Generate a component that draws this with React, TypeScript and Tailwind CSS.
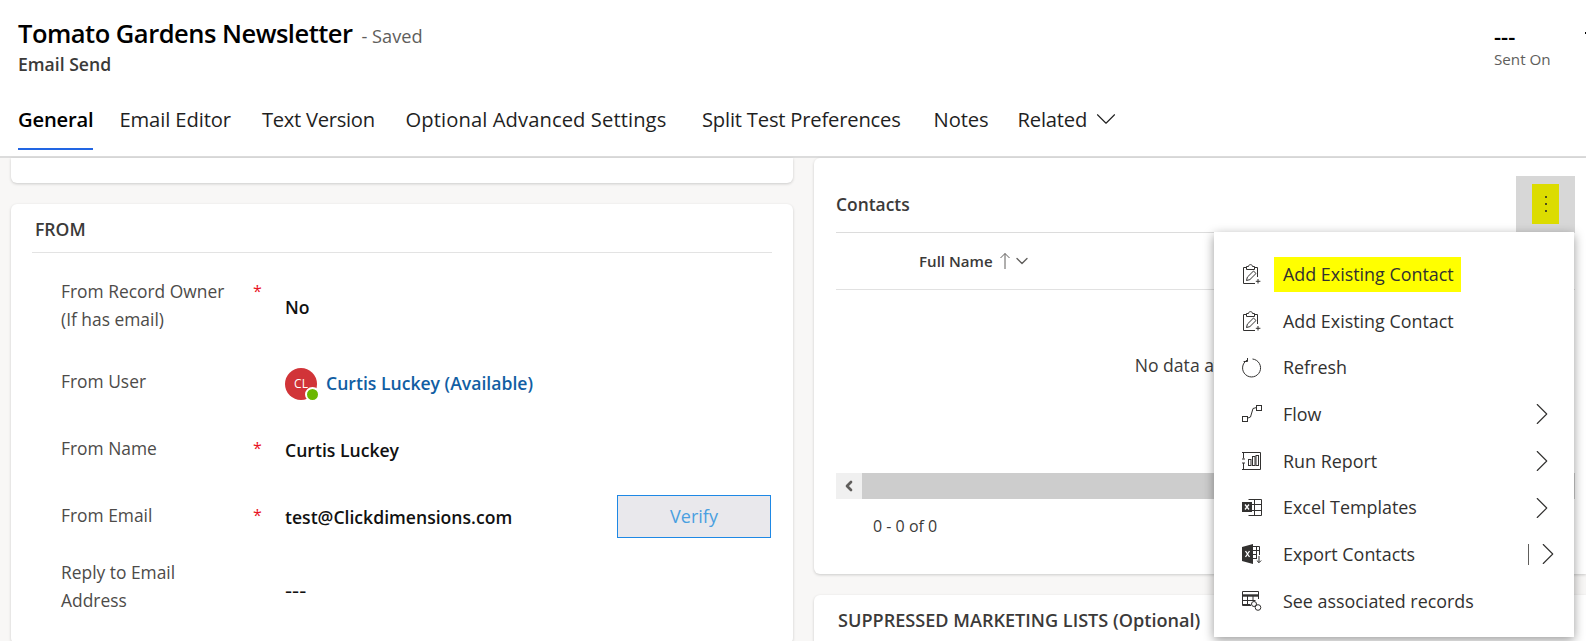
import { ChevronDown, ChevronLeft, ChevronRight } from "lucide-react";

const tabs = [
  { label: "Email Editor", width: "w-[142.6px] tracking-[-0.1px]" },
  { label: "Text Version", width: "w-[143.6px] tracking-[-0.3px]" },
  { label: "Optional Advanced Settings", width: "w-[296.4px] tracking-[0.08px]" },
  { label: "Split Test Preferences", width: "w-[231.6px] tracking-[-0.2px]" },
  { label: "Notes", width: "w-[84px] tracking-[-0.1px]" },
];

function ClipboardIcon() {
  return (
    <svg width="20" height="20" viewBox="0 0 20 20" fill="none" stroke="#323130" strokeWidth="1">
      <path d="M5 3.5H1.5V19.5H13M12 3.5h3.5V13" />
      <path d="M4.5 5.5V2.5H6.5C6.5 0 10.5 0 10.5 2.5H12.5V5.5Z" />
      <path d="M4.5 16.5l.9-3.4 6.1-6.1 2.5 2.5-6.1 6.1Z" />
      <path d="M16 15v4.5M13.8 17.3h4.6" />
    </svg>
  );
}

function RefreshIcon() {
  return (
    <svg width="20" height="20" viewBox="0 0 20 20" fill="none" stroke="#323130" strokeWidth="1">
      <path d="M5 2.2A9 9 0 1 0 10.5 1" />
      <path d="M5.5 0V3.5H1.6" />
    </svg>
  );
}

function FlowIcon() {
  return (
    <svg width="20" height="20" viewBox="0 0 20 20" fill="none" stroke="#323130" strokeWidth="1">
      <rect x="0.5" y="12.5" width="5" height="5" />
      <rect x="14.5" y="1.5" width="5" height="5" />
      <path d="M6 14l2.5-1 2.5-8.5 3.5-1" />
    </svg>
  );
}

function ReportIcon() {
  return (
    <svg width="20" height="20" viewBox="0 0 20 20" fill="none" stroke="#323130" strokeWidth="1">
      <path d="M1.5 1.5H18.5V18.5H1.5" />
      <path d="M0 1.5h3M1.5 1.5v6M0 8h3M0 12h3M1.5 12v6.5M0 18.5h3" />
      <rect x="6.5" y="8.5" width="2.5" height="6" />
      <rect x="10.5" y="5.5" width="2.5" height="9" />
      <rect x="14" y="4.5" width="2.5" height="10" />
    </svg>
  );
}

function ExcelIcon() {
  return (
    <svg width="20" height="20" viewBox="0 0 20 20" fill="none">
      <path d="M6.5 1.5h13v16h-13M6.5 6.5h13M6.5 12.5h13M12.5 1.5v16" stroke="#323130" />
      <rect x="0" y="4" width="10" height="10" fill="#323130" />
      <path d="M3 6.5l4 5M7 6.5l-4 5" stroke="#fff" strokeWidth="1.3" />
    </svg>
  );
}

function ExportIcon() {
  return (
    <svg width="20" height="20" viewBox="0 0 20 20" fill="none">
      <path d="M0 3L11 0V20L0 17Z" fill="#323130" />
      <path d="M3.5 7l4 6M7.5 7l-4 6" stroke="#fff" strokeWidth="1.3" />
      <path d="M11 2.5h6.5V11M11 6.5h6.5M11 10.5h4M11 14.5h4M14.5 3v12" stroke="#323130" />
      <path d="M17 12v6.5M14.8 16.5l2.2 2.2 2.2-2.2" stroke="#323130" />
    </svg>
  );
}

function RecordsIcon() {
  return (
    <svg width="20" height="20" viewBox="0 0 20 20" fill="none" stroke="#323130" strokeWidth="1">
      <path d="M9 14.5H.5V.5H16.5V8" />
      <path d="M.5 4.5h16" strokeWidth="2.4" />
      <path d="M.5 9.5h13M.5 13.5h8M5.5 5v9M11 5v4" />
      <circle cx="12" cy="13" r="2.5" />
      <circle cx="16" cy="16.5" r="2.8" />
    </svg>
  );
}

const menuItems = [
  { label: "Add Existing Contact", icon: <ClipboardIcon />, marked: true },
  { label: "Add Existing Contact", icon: <ClipboardIcon /> },
  { label: "Refresh", icon: <RefreshIcon /> },
  { label: "Flow", icon: <FlowIcon />, arrow: true },
  { label: "Run Report", icon: <ReportIcon />, arrow: true },
  { label: "Excel Templates", icon: <ExcelIcon />, arrow: true },
  { label: "Export Contacts", icon: <ExportIcon />, split: true },
  { label: "See associated records", icon: <RecordsIcon /> },
];

function FieldRow({
  label,
  required,
  height,
  labelPad = "pb-[6px]",
  children,
}: {
  label: React.ReactNode;
  required?: boolean;
  height: string;
  labelPad?: string;
  children: React.ReactNode;
}) {
  return (
    <div className={`flex items-center ${height}`}>
      <div className={`flex w-[253px] items-start pl-[29px] text-[17.4px] leading-[28px] text-[#4d4b49] ${labelPad}`}>
        <div className="w-[192px]">{label}</div>
        <div className="text-[16px] text-[#e81123]">{required ? "*" : ""}</div>
      </div>
      <div className="flex flex-1 items-center justify-between text-[17.6px] font-semibold text-[#111]">
        {children}
      </div>
    </div>
  );
}

export default function App() {
  return (
    <div className="relative h-[641px] overflow-hidden bg-[#f8f7f6] font-['Open_Sans',sans-serif] text-[#323130]">
      {/* Header */}
      <header className="h-[158px] border-b-2 border-[#dcdcdc] bg-white pl-[18px]">
        <div className="flex h-[98px]">
          <div className="flex-1 pt-[15px]">
            <div className="flex items-baseline gap-[9px]">
              <h1 className="text-[25.5px] leading-[36px] font-semibold tracking-[-0.5px] text-black">
                Tomato Gardens Newsletter
              </h1>
              <span className="text-[18.2px] text-[#605e5c]">- Saved</span>
            </div>
            <div className="mt-[1px] text-[17.6px] leading-[24px] font-semibold text-[#3b3a39]">Email Send</div>
          </div>
          <div className="w-[91px] pt-[24px]">
            <div className="text-[22px] leading-[24px] font-semibold text-black">---</div>
            <div className="text-[15.2px] leading-[22px] text-[#605e5c]">Sent On</div>
          </div>
          <div className="mt-[32px] h-[2px] w-px bg-black" />
        </div>
        <nav className="flex h-[52px] items-start text-[20.2px] tracking-[-0.2px] text-[#1f1f1f]">
          <div className="mr-[26px] flex h-[52px] items-start border-b-2 border-[#2266e3] pt-[6px] font-semibold text-black">
            General
          </div>
          {tabs.map((tab) => (
            <div key={tab.label} className={`pt-[6px] whitespace-nowrap ${tab.width}`}>
              {tab.label}
            </div>
          ))}
          <div className="flex h-[42px] items-center gap-[2px]">
            Related <ChevronDown className="h-[34px] w-[34px]" strokeWidth={0.8} />
          </div>
        </nav>
      </header>

      <main className="flex gap-[21px] pl-[11px]">
        {/* Left column */}
        <div className="flex w-[782px] flex-col gap-[21px]">
          <div className="h-[25px] rounded-b-md bg-white shadow-[0_1px_3px_rgba(0,0,0,0.18)]" />
          <section className="h-[440px] rounded-md bg-white px-[21px] shadow-[0_1px_3px_rgba(0,0,0,0.18)]">
            <h2 className="flex h-[49px] items-center border-b border-[#e3e3e3] pt-[3px] pl-[3px] text-[17.6px] font-semibold text-[#3b3a39]">
              FROM
            </h2>
            <div className="pt-[12px]">
              <FieldRow label={<>From Record Owner<br />(If has email)</>} required height="h-[85px]" labelPad="pb-[5px]">
                No
              </FieldRow>
              <FieldRow label="From User" height="h-[67px]">
                <span className="flex items-center gap-[9px]">
                  <span className="relative flex h-[32px] w-[32px] items-center justify-center rounded-full bg-[#d13438] text-[12px] font-normal text-white">
                    CL
                    <span className="absolute right-[-3px] bottom-[-2px] h-[15px] w-[15px] rounded-full border-2 border-white bg-[#6bb700]" />
                  </span>
                  <span className="text-[#115ea3]">Curtis Luckey (Available)</span>
                </span>
              </FieldRow>
              <FieldRow label="From Name" required height="h-[67px]">
                Curtis Luckey
              </FieldRow>
              <FieldRow label="From Email" required height="h-[66px]" labelPad="pb-[5px]">
                test@Clickdimensions.com
                <button className="mr-[1px] mb-[2px] h-[43px] w-[154px] border border-[#1e88e5] bg-[#e9e8ec] text-[18px] font-normal text-[#4a9fe0]">
                  Verify
                </button>
              </FieldRow>
              <div className="mt-[2px]">
                <FieldRow label={<>Reply to Email<br />Address</>} height="h-[74px]">
                  <span className="text-[22px] font-normal">---</span>
                </FieldRow>
              </div>
            </div>
          </section>
        </div>

        {/* Right column */}
        <div className="flex flex-1 flex-col gap-[21px]">
          <section className="h-[416px] rounded-l-md bg-white pr-[11px] pl-[22px] shadow-[0_1px_3px_rgba(0,0,0,0.18)]">
            <div className="flex h-[75px] items-end justify-between border-b border-[#dcdcdc]">
              <h2 className="pb-[15px] text-[17.4px] font-semibold text-[#3b3a39]">Contacts</h2>
              <div className="flex h-[56px] w-[59px] items-center justify-center bg-[#d7d7d7]">
                <div className="flex h-[40px] w-[27px] flex-col items-center justify-center gap-[5px] bg-[#dcdc00]">
                  <span className="h-[2px] w-[2px] rounded-full bg-[#222]" />
                  <span className="h-[2px] w-[2px] rounded-full bg-[#222]" />
                  <span className="h-[2px] w-[2px] rounded-full bg-[#222]" />
                </div>
              </div>
            </div>
            <div className="flex h-[57px] items-center border-b border-[#e1e1e1] pl-[83px] text-[15.1px] font-semibold text-[#3b3a39]">
              Full Name
              <svg className="mr-[1px] ml-[6px]" width="12" height="18" viewBox="0 0 12 18" fill="none" stroke="#605e5c">
                <path d="M6 17V1.5M1.5 6L6 1.5 10.5 6" />
              </svg>
              <ChevronDown className="h-[20px] w-[20px] text-[#605e5c]" strokeWidth={1.6} />
            </div>
            <div className="flex h-[183px] items-start justify-center pt-[62px] text-[17.6px] leading-[26px] text-[#3b3a39]">
              No data available
            </div>
            <div className="flex h-[26px]">
              <div className="flex w-[26px] items-center justify-center bg-[#f0f0f0]">
                <ChevronLeft className="h-[16px] w-[16px] text-[#605e5c]" strokeWidth={4} />
              </div>
              <div className="flex-1 bg-[#cdcdcd]" />
            </div>
            <div className="pt-[16px] pl-[37px] text-[16px] leading-[22px] text-[#3b3a39]">0 - 0 of 0</div>
          </section>
          <section className="h-[60px] rounded-tl-md bg-white pt-[11px] pl-[24px] shadow-[0_1px_3px_rgba(0,0,0,0.18)]">
            <h2 className="text-[18.1px] leading-[28px] font-semibold text-[#3b3a39]">
              SUPPRESSED MARKETING LISTS (Optional)
            </h2>
          </section>
        </div>
      </main>

      {/* Command menu */}
      <div className="absolute top-[232px] left-[1214px] h-[405px] w-[360px] bg-white pt-[19px] shadow-[0_3px_10px_rgba(0,0,0,0.4)]">
        {menuItems.map((item, i) => (
          <div key={i} className="flex h-[46.7px] items-center pl-[28px] text-[17.9px] text-[#323130]">
            <span className="flex h-[20px] w-[20px] items-center justify-center">{item.icon}</span>
            <span className={item.marked ? "ml-[12px] bg-[#ffff00]" : "ml-[12px]"}>
              <span className={item.marked ? "block pr-[7px] pl-[9px] leading-[35px]" : "block pl-[9px]"}>{item.label}</span>
            </span>
            {item.arrow && (
              <ChevronRight className="absolute left-[309px] h-[38px] w-[38px]" strokeWidth={0.7} />
            )}
            {item.split && (
              <span className="absolute left-[314px] flex items-center">
                <span className="h-[21px] w-px bg-[#605e5c]" />
                <ChevronRight className="h-[38px] w-[38px]" strokeWidth={0.7} />
              </span>
            )}
          </div>
        ))}
      </div>
    </div>
  );
}
